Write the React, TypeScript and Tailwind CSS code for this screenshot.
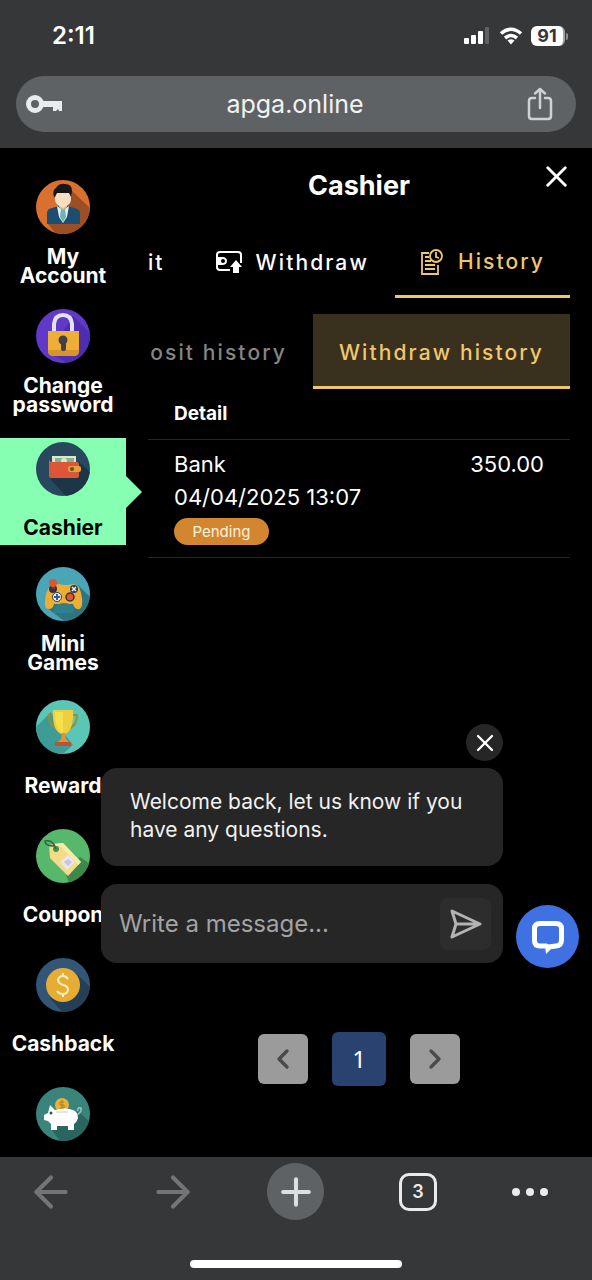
import React, { useState } from 'react'
import { ArrowLeft, ArrowRight, ChevronLeft, ChevronRight, Plus, X } from 'lucide-react'

interface MenuItem {
  id: string
  label: string
  icon: React.ReactNode
  spacing: string
}

interface Transaction {
  id: number
  method: string
  date: string
  status: string
  amount: string
}

const transactions: Transaction[] = [
  { id: 1, method: 'Bank', date: '04/04/2025 13:07', status: 'Pending', amount: '350.00' }
]

function Badge({ color, children }: { color: string; children: React.ReactNode }) {
  return (
    <svg viewBox="0 0 54 54" className="h-[54px] w-[54px] shrink-0 rounded-full" aria-hidden="true">
      <rect width="54" height="54" fill={color} />
      {children}
    </svg>
  )
}

const menuItems: MenuItem[] = [
  {
    id: 'account',
    label: 'My Account',
    spacing: 'mb-[22px]',
    icon: (
      <Badge color="#d9702f">
        <path d="M34 9 54 28v26H20l-8-10Z" fill="#9b4f25" />
        <path d="M11 44V33q0-4 5-5l7-2h8l7 2q6 1 6 5v11Z" fill="#1d4d70" />
        <path d="m21 26 6 4 6-4-2 11-4 6-4-6Z" fill="#dff0ee" />
        <path d="m25 29h4l1 8-3 5-3-5Z" fill="#6fb3b5" />
        <path d="M23 20h8v7l-4 3-4-3Z" fill="#e5bb95" />
        <path d="M19 12h16v7q0 4-3 6l-5 3-5-3q-3-2-3-6Z" fill="#f8dfc0" />
        <path d="M18 17q-2-7 2-9 3-5 9-4 7 0 7 7l-1 6-2-4H21l-2 4Z" fill="#17171b" />
      </Badge>
    )
  },
  {
    id: 'password',
    label: 'Change password',
    spacing: 'mb-[26px]',
    icon: (
      <Badge color="#6039c8">
        <path d="m37 7 17 17v30H32L13 44Z" fill="#4f2db0" />
        <path d="M18 24V15q1-9 9-9t9 9v9" fill="none" stroke="#e6e0f3" strokeWidth="4" />
        <path d="M12 22h31v20q0 5-6 5H18q-6 0-6-5Z" fill="#eeae37" />
        <path d="M12 41h31v1q0 5-6 5H18q-6 0-6-5Z" fill="#d7942a" />
        <circle cx="27" cy="31" r="4.5" fill="#443f46" />
        <rect x="25" y="32" width="5" height="10" rx="2" fill="#443f46" />
      </Badge>
    )
  },
  {
    id: 'cashier',
    label: 'Cashier',
    spacing: 'mb-[18px]',
    icon: (
      <Badge color="#28485d">
        <path d="m43 20 11 10v24H30L14 37Z" fill="#1c3547" />
        <path d="M16 14h24v8H16Z" fill="#dce6cf" />
        <path d="M19 16h19v5H19Z" fill="#83b58a" />
        <circle cx="28" cy="19" r="3" fill="#dce6cf" />
        <path d="M13 17q0 3 5 3h23q2 0 2 2v12q0 2-2 2H15q-2 0-2-2Z" fill="#dc5738" />
        <rect x="32" y="24" width="13" height="6" rx="2" fill="#e0a13e" />
        <circle cx="36" cy="27" r="2" fill="#6b4b2d" />
      </Badge>
    )
  },
  {
    id: 'games',
    label: 'Mini Games',
    spacing: 'mb-[26px]',
    icon: (
      <Badge color="#4aa5b6">
        <path d="m42 18 12 12v24H28L10 40Z" fill="#2c7582" />
        <path d="M15 18q6-2 12 0h5q8-2 11 2 4 10 3 18-1 5-5 4-3-1-4-5H18q-1 5-5 5-4 0-4-5 0-13 6-19Z" fill="#efae32" />
        <path d="M18 42q2-6 10-6t10 6v4H18Z" fill="#2f7f8c" />
        <circle cx="17" cy="22" r="4" fill="#24374b" />
        <path d="M16 15h3v7h-3Z" fill="#8e3729" />
        <circle cx="17" cy="16" r="4" fill="#dc562f" />
        <circle cx="21" cy="30" r="4.5" fill="#f4efe2" stroke="#24425e" strokeWidth="1" />
        <path d="M21 27v6m-3-3h6" stroke="#315f99" strokeWidth="2" />
        <circle cx="34" cy="30" r="4" fill="#e3572e" stroke="#3a3440" strokeWidth="1.5" />
        <circle cx="38" cy="22" r="4" fill="#24425e" />
        <path d="m36 20 4 4m0-4-4 4" stroke="#f4efe2" strokeWidth="1.5" />
      </Badge>
    )
  },
  {
    id: 'reward',
    label: 'Reward',
    spacing: 'mb-[22px]',
    icon: (
      <Badge color="#5cc6b6">
        <path d="M15 12 0 27v27h27l10-9-8-10Z" fill="#3d9c95" />
        <path d="M18 15h-5q0 11 9 14m14-14h5q0 11-9 14" fill="none" stroke="#998f3b" strokeWidth="2" />
        <path d="M17 10h20q1 20-8 24h-4q-9-4-8-24Z" fill="#f0cf3d" />
        <path d="M19 12h8v21q-8-3-8-21Z" fill="#f7e04d" />
        <path d="M26 33h3l1 6 4 4H21l4-4Z" fill="#e4923a" />
        <path d="M19 42h16v4H19Z" fill="#bf5133" />
      </Badge>
    )
  },
  {
    id: 'coupon',
    label: 'Coupon',
    spacing: 'mb-[22px]',
    icon: (
      <Badge color="#57b76b">
        <path d="m44 28 10 7v19H33l-3-8Z" fill="#3c884d" />
        <path d="m13 16 14-2 18 19-13 14-18-18Z" fill="#f4db86" />
        <path d="m16 15 11-1 18 19-3 3-18-19Z" fill="#f9e9ab" />
        <path d="m24 33 8-7 7 7-8 8Z" fill="#e8e6f0" />
        <path d="m28 33 4-3 4 3-4 4Z" fill="#c8c6d8" />
        <circle cx="20" cy="20" r="3" fill="#3f9456" />
        <path d="M20 20Q17 10 9 12q0 5 9 5" fill="none" stroke="#35634a" strokeWidth="1.5" />
      </Badge>
    )
  },
  {
    id: 'cashback',
    label: 'Cashback',
    spacing: 'mb-[22px]',
    icon: (
      <Badge color="#345676">
        <path d="m40 15 14 14v25H26L14 40Z" fill="#263f58" />
        <circle cx="27" cy="27" r="17" fill="#e5ad35" />
        <path d="M32 21q-2-3-5-3-4 0-5 4 0 3 5 5 5 1 5 5-1 4-5 4-4 0-6-3M27 15v3m0 18v3" fill="none" stroke="#fff0bd" strokeWidth="2" />
      </Badge>
    )
  },
  {
    id: 'savings',
    label: '',
    spacing: '',
    icon: (
      <Badge color="#3a857b">
        <path d="m43 25 11 10v19H24L15 42Z" fill="#2a665f" />
        <circle cx="26" cy="18" r="7" fill="#e8b13b" />
        <path d="M28 15h-4v3h4v3h-4m2-8v10" fill="none" stroke="#b17c25" />
        <path d="m14 18 5 5q11-3 18 0 5 2 5 8-1 4-4 6v6h-6v-4H21v4h-6v-6l-3-3-4-1v-5l4-2Z" fill="#fff" />
        <path d="M41 28q5-3 4-7-4-1-3 3" fill="none" stroke="#9bc9c1" strokeWidth="1.5" />
        <path d="M20 25h12" stroke="#d9dede" strokeWidth="1.5" />
        <circle cx="15" cy="26" r="1.5" fill="#285d57" />
      </Badge>
    )
  }
]

function StatusBar() {
  return (
    <div className="flex h-[76px] items-center justify-between pr-6 pl-[52px]">
      <span className="pb-1 text-2xl font-semibold text-white">2:11</span>
      <div className="flex items-center gap-2 pb-1">
        <svg viewBox="0 0 28 18" className="h-[18px] w-7" fill="#fff" aria-hidden="true">
          <rect x="1" y="11" width="5" height="6" rx="1" />
          <rect x="8" y="8" width="5" height="9" rx="1" />
          <rect x="15" y="4" width="5" height="13" rx="1" />
          <rect x="22" y="0" width="4" height="17" rx="1" fill="#606163" />
        </svg>
        <svg viewBox="0 0 24 18" className="h-[18px] w-6" fill="none" stroke="#fff" strokeWidth="3.6" aria-hidden="true">
          <path d="M2 6.500Q12-2 22 6.500M6 11q6-5 12 0" />
          <path d="m12 17.500-3.500-4q3.500-2.500 7 0Z" fill="#fff" stroke="none" />
        </svg>
        <div className="flex items-center gap-px">
          <span className="h-5 w-[34px] rounded-md border-r-2 border-[#a3a4a5] bg-white text-center text-lg leading-5 font-bold text-[#363738]">91</span>
          <span className="h-[7px] w-[2px] rounded-r bg-[#8d8e8f]" />
        </div>
      </div>
    </div>
  )
}

function BrowserHeader() {
  return (
    <header className="h-[148px] shrink-0 bg-[#363738]">
      <StatusBar />
      <div className="mx-4 flex h-14 items-center justify-between rounded-full bg-[#5f6265] pr-[22px] pl-[10px]">
        <button type="button" aria-label="Saved passwords">
          <svg viewBox="0 0 38 24" className="h-6 w-[38px]" aria-hidden="true">
            <circle cx="9" cy="12" r="6.500" fill="none" stroke="#e9ebed" strokeWidth="5" />
            <path d="M17 9h19v10h-3l-1-2-2 2h-3v-4H17Z" fill="#e9ebed" />
          </svg>
        </button>
        <span className="text-[25px] leading-8 text-[#f1f2f3]">apga.online</span>
        <button type="button" aria-label="Share">
          <svg viewBox="0 0 28 34" className="h-[34px] w-7" fill="none" stroke="#cfd1d3" strokeWidth="2.500" strokeLinecap="round" strokeLinejoin="round" aria-hidden="true">
            <path d="M9 11H6q-3 0-3 3v15q0 3 3 3h16q3 0 3-3V14q0-3-3-3h-3M14 21V2M9 6.500 14 2l5 4.500" />
          </svg>
        </button>
      </div>
    </header>
  )
}

function Sidebar({ active, onSelect }: { active: string; onSelect: (id: string) => void }) {
  return (
    <nav className="flex w-[126px] shrink-0 flex-col pt-7">
      {menuItems.map((item) => (
        <button
          key={item.id}
          type="button"
          aria-label={item.label || 'Savings'}
          onClick={() => onSelect(item.id)}
          className={`relative flex h-[107px] shrink-0 flex-col items-center pt-1 ${item.spacing} ${
            active === item.id ? 'bg-[#87ffb3] text-black' : 'text-white'
          }`}
        >
          {item.icon}
          <span className="mt-[15px] flex min-h-8 items-center px-1 text-[21px] leading-[19px] font-bold">
            {item.label}
          </span>
          {active === item.id && (
            <svg viewBox="0 0 16 32" className="absolute top-[38px] left-full h-8 w-4" fill="#87ffb3" aria-hidden="true">
              <path d="M0 0 16 16 0 32Z" />
            </svg>
          )}
        </button>
      ))}
    </nav>
  )
}

function WithdrawIcon() {
  return (
    <svg viewBox="0 0 26 24" className="h-6 w-[26px]" fill="none" stroke="currentColor" strokeWidth="2" aria-hidden="true">
      <path d="M14 19H4q-3 0-3-3V4q0-3 3-3h18q3 0 3 3v8" />
      <path d="M1 6h5q5 0 5 4t-5 4H1Z" fill="currentColor" stroke="none" />
      <circle cx="7" cy="10" r="2" fill="#000" stroke="none" />
      <path d="m20 9 6 7h-3v6h-6v-6h-3Z" fill="currentColor" stroke="none" />
    </svg>
  )
}

function HistoryIcon() {
  return (
    <svg viewBox="0 0 24 26" className="h-[26px] w-6" fill="none" stroke="currentColor" strokeWidth="1.800" aria-hidden="true">
      <path d="M9 4H2v21h16v-9M5 8h4M5 12h6M5 16h10M5 20h10" />
      <circle cx="16" cy="7" r="6" />
      <path d="M16 3v5l3 1" />
    </svg>
  )
}

function TransactionTable() {
  return (
    <table className="w-full text-left text-[22px] text-white">
      <thead>
        <tr className="h-[50px] border-b border-[#262626]">
          <th scope="col" className="pl-[26px] text-[19px] font-bold">Detail</th>
          <th scope="col" aria-label="Amount" />
        </tr>
      </thead>
      <tbody>
        {transactions.map((transaction) => (
          <tr key={transaction.id} className="h-[118px] border-b border-[#262626] align-top">
            <td className="pt-2 pl-[26px] leading-[33px]">
              <div>{transaction.method}</div>
              <div>{transaction.date}</div>
              <div className="mt-1 w-[95px] rounded-full bg-[#d2862f] text-center text-[15px] leading-[27px] text-[#fff3df]">
                {transaction.status}
              </div>
            </td>
            <td className="pt-2 pr-[26px] text-right leading-[33px]">{transaction.amount}</td>
          </tr>
        ))}
      </tbody>
    </table>
  )
}

function Pagination() {
  return (
    <div className="mt-auto flex items-center justify-center gap-6 pb-[71px]">
      <button type="button" aria-label="Previous page" className="flex h-[50px] w-[50px] items-center justify-center rounded-md bg-[#9b9b9b] text-[#4a4a4a]">
        <ChevronLeft className="h-8 w-8" strokeWidth={2.5} />
      </button>
      <button type="button" className="h-[54px] w-[54px] rounded-md bg-[#2a4270] font-['Noto_Sans',sans-serif] text-2xl text-white">
        1
      </button>
      <button type="button" aria-label="Next page" className="flex h-[50px] w-[50px] items-center justify-center rounded-md bg-[#9b9b9b] text-[#4a4a4a]">
        <ChevronRight className="h-8 w-8" strokeWidth={2.5} />
      </button>
    </div>
  )
}

function Cashier() {
  return (
    <section className="mx-[22px] flex min-w-0 flex-1 flex-col">
      <div className="relative flex h-[76px] shrink-0 items-center justify-center">
        <h1 className="text-[27px] leading-8 font-bold text-white">Cashier</h1>
        <button type="button" aria-label="Close cashier" className="absolute top-[11px] -right-1 text-white">
          <X className="h-[35px] w-[35px]" strokeWidth={2} />
        </button>
      </div>

      {/* Tabs */}
      <div className="flex shrink-0 justify-end overflow-hidden text-[21px] font-medium tracking-widest whitespace-nowrap text-white">
        <button type="button" className="h-[74px] pt-[3px] pr-[25px]">Deposit</button>
        <button type="button" className="flex h-[74px] items-center gap-3.5 px-[26px] pt-[3px]">
          <WithdrawIcon />
          Withdraw
        </button>
        <button type="button" className="flex h-[74px] items-center gap-3.5 border-b-[3px] border-[#eec66c] px-[25px] pt-[5px] text-[#f0c76d]">
          <HistoryIcon />
          History
        </button>
      </div>

      {/* History type */}
      <div className="mt-4 flex shrink-0 justify-end overflow-hidden text-[21px] font-medium tracking-widest whitespace-nowrap">
        <button type="button" className="h-[75px] px-[26px] pt-[3px] text-[#858585]">Deposit history</button>
        <button type="button" className="h-[75px] border-b-[3px] border-[#eec66c] bg-[#3a301e] px-[26px] pt-[5px] text-[#f0c76d]">
          Withdraw history
        </button>
      </div>

      <TransactionTable />
      <Pagination />
    </section>
  )
}

function ChatWidget() {
  const [open, setOpen] = useState(true)
  const [message, setMessage] = useState('')

  return (
    <div className="absolute right-[13px] bottom-[189px] left-[101px] flex items-end gap-[13px]">
      <div className="mb-[5px] flex min-w-0 flex-1 flex-col">
        {open && (
          <>
            <button
              type="button"
              aria-label="Dismiss message"
              onClick={() => setOpen(false)}
              className="mb-[7px] flex h-[37px] w-[37px] items-center justify-center self-end rounded-full bg-[#262626] text-white"
            >
              <X className="h-7 w-7" strokeWidth={2} />
            </button>
            <p className="mb-[18px] min-h-[98px] rounded-2xl bg-[#262626] px-[29px] pt-5 text-[21px] leading-7 text-[#f1f1f1]">
              Welcome back, let us know if you have any questions.
            </p>
          </>
        )}
        <form
          className="flex h-[79px] items-center rounded-2xl bg-[#262626] pr-3 pl-[18px]"
          onSubmit={(e) => e.preventDefault()}
        >
          <input
            type="text"
            aria-label="Write a message"
            placeholder="Write a message..."
            value={message}
            onChange={(e) => setMessage(e.target.value)}
            className="min-w-0 flex-1 bg-transparent text-2xl text-white outline-none placeholder:text-[#a3a3a3]"
          />
          <button type="submit" aria-label="Send" className="flex h-[52px] w-[51px] items-center justify-center rounded-lg bg-[#2d2d2d]">
            <svg viewBox="0 0 32 32" className="h-8 w-8" fill="none" stroke="#b4b4b4" strokeWidth="3" strokeLinejoin="round" aria-hidden="true">
              <path d="M2 3 30 16 2 29l4-13ZM6 16h22" />
            </svg>
          </button>
        </form>
      </div>
      <button type="button" aria-label="Open chat" className="flex h-[63px] w-[63px] shrink-0 items-center justify-center rounded-full bg-[#3f71e3]">
        <svg viewBox="0 0 36 36" className="h-9 w-9" aria-hidden="true">
          <path d="M10 4.500h16q5.500 0 5.500 5.500v11q0 5.500-5.500 6l-8 1-2-1h-6q-5.500 0-5.500-5.500V10q0-5.500 5.500-5.500Z" fill="none" stroke="#fff" strokeWidth="5" />
          <path d="M15 26h13l-7 4-5 5Z" fill="#fff" />
        </svg>
      </button>
    </div>
  )
}

function BrowserFooter() {
  return (
    <footer className="flex h-[123px] shrink-0 flex-col items-center justify-between bg-[#363738] pt-[6px] pb-3">
      <div className="flex w-full items-center justify-between pr-11 pl-[22px]">
        <button type="button" aria-label="Back" className="flex h-[57px] w-[57px] items-center justify-center text-[#737476]">
          <ArrowLeft className="h-[50px] w-[50px]" strokeWidth={2} />
        </button>
        <button type="button" aria-label="Forward" className="flex h-[57px] w-[57px] items-center justify-center text-[#737476]">
          <ArrowRight className="h-[50px] w-[50px]" strokeWidth={2} />
        </button>
        <button type="button" aria-label="New tab" className="flex h-[57px] w-[57px] items-center justify-center rounded-full bg-[#5f6265] text-[#dcdfe1]">
          <Plus className="h-11 w-11" strokeWidth={2.2} />
        </button>
        <button type="button" aria-label="Open tabs" className="flex h-[57px] w-[57px] items-center justify-center">
          <span className="flex h-[38px] w-[38px] items-center justify-center rounded-[10px] border-[3px] border-[#ebebec] text-lg font-semibold text-[#ebebec]">3</span>
        </button>
        <button type="button" aria-label="More">
          <svg viewBox="0 0 36 8" className="h-2 w-9" fill="#ebebec" aria-hidden="true">
            <circle cx="4" cy="4" r="4" />
            <circle cx="18" cy="4" r="4" />
            <circle cx="32" cy="4" r="4" />
          </svg>
        </button>
      </div>
      <div className="h-2 w-[212px] rounded-full bg-white" />
    </footer>
  )
}

function App() {
  const [active, setActive] = useState('cashier')

  return (
    <div className="flex h-screen flex-col bg-black font-['Inter',sans-serif]">
      <BrowserHeader />
      <main className="relative flex min-h-0 flex-1 overflow-hidden">
        <Sidebar active={active} onSelect={setActive} />
        <Cashier />
        <ChatWidget />
      </main>
      <BrowserFooter />
    </div>
  )
}

export default App
